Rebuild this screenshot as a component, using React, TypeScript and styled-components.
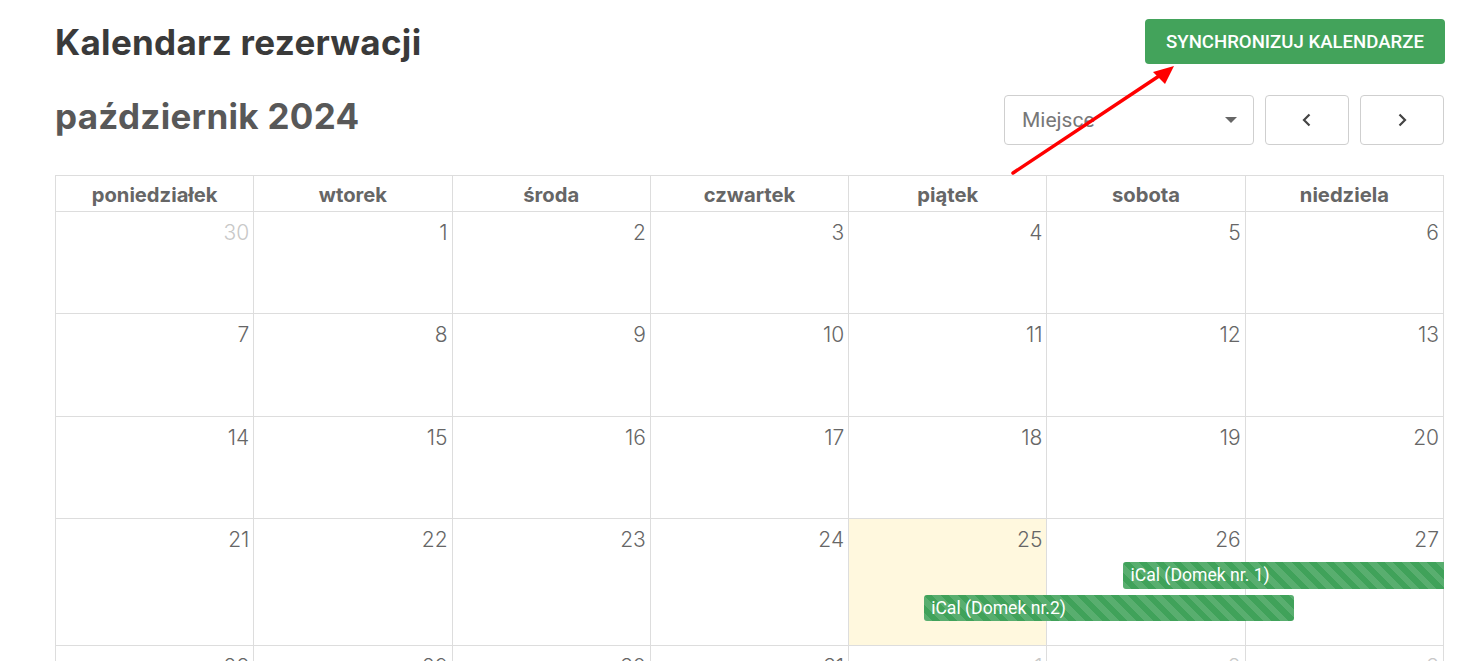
import React from "react";
import styled, { createGlobalStyle } from "styled-components";

const GlobalStyle = createGlobalStyle`
  html, body { margin: 0; padding: 0; background: #fff; }
  body { font-family: "Inter", "Noto Sans", sans-serif; }
  * { box-sizing: border-box; }
`;

const Page = styled.div`
  position: relative;
  padding: 19px 22px 40px 55px;
`;

const TopRow = styled.div`
  display: flex;
  align-items: center;
  justify-content: space-between;
  height: 45px;
`;

const Title = styled.h1`
  margin: 0;
  font-family: "Inter", sans-serif;
  font-weight: 700;
  font-size: 35px;
  line-height: 45px;
  color: #3a3a3a;
  letter-spacing: 0.3px;
  padding-top: 2px;
`;

const SyncButton = styled.button`
  height: 45px;
  width: 300px;
  border: none;
  border-radius: 4px;
  background: #43a35b;
  color: #fff;
  font-family: "Roboto", sans-serif;
  font-weight: 500;
  font-size: 18.6px;
  text-transform: uppercase;
  margin-right: -1px;
  padding: 0;
`;

const ControlsRow = styled.div`
  display: flex;
  align-items: center;
  justify-content: space-between;
  height: 49px;
  margin-top: 31px;
`;

const MonthTitle = styled.h2`
  margin: 0;
  font-family: "Inter", sans-serif;
  font-weight: 700;
  font-size: 35px;
  line-height: 45px;
  letter-spacing: 0.3px;
  color: #585858;
  margin-top: -6px;
`;

const Controls = styled.div`
  display: flex;
  gap: 11px;
  align-items: center;
`;

const Select = styled.div`
  width: 250px;
  height: 50px;
  border: 1px solid #cfcfcf;
  border-radius: 4px;
  display: flex;
  align-items: center;
  justify-content: space-between;
  padding: 0 16px 0 17px;
  font-family: "Roboto", sans-serif;
  font-size: 21px;
  color: #777;
`;

const Caret = styled.span`
  width: 0;
  height: 0;
  border-left: 6px solid transparent;
  border-right: 6px solid transparent;
  border-top: 6px solid #666;
`;

const NavButton = styled.button`
  width: 84px;
  height: 50px;
  border: 1px solid #cfcfcf;
  border-radius: 4px;
  background: #fff;
  display: flex;
  align-items: center;
  justify-content: center;
  padding: 0;
`;

const Table = styled.div`
  margin-top: 31px;
  border-top: 1px solid #ddd;
  border-left: 1px solid #ddd;
`;

const HeaderRow = styled.div`
  display: grid;
  grid-template-columns: repeat(7, 1fr);
`;

const HeaderCell = styled.div`
  height: 36px;
  border-right: 1px solid #ddd;
  border-bottom: 1px solid #ddd;
  display: flex;
  align-items: center;
  justify-content: center;
  font-family: "Inter", sans-serif;
  font-weight: 700;
  font-size: 20.2px;
  color: #666;
  padding-top: 2px;
`;

const Week = styled.div<{ $min: number }>`
  display: grid;
  grid-template-columns: repeat(7, 1fr);
  grid-template-rows: 42px auto auto 1fr;
  min-height: ${(p) => p.$min}px;
`;

const DayCell = styled.div<{ $col: number; $today?: boolean }>`
  grid-column: ${(p) => p.$col};
  grid-row: 1 / -1;
  border-right: 1px solid #ddd;
  border-bottom: 1px solid #ddd;
  background: ${(p) => (p.$today ? "#fff8de" : "#fff")};
`;

const DayNum = styled.div<{ $col: number; $other?: boolean }>`
  grid-column: ${(p) => p.$col};
  grid-row: 1;
  text-align: right;
  padding: 8px 5px 0 0;
  font-family: "Inter", sans-serif;
  font-weight: 300;
  font-size: 21px;
  line-height: 26px;
  color: ${(p) => (p.$other ? "#c8c8c8" : "#666")};
  z-index: 1;
`;

const Event = styled.div<{
  $from: number;
  $to: number;
  $row: number;
  $ml: number;
  $mr: number;
  $openEnd?: boolean;
}>`
  grid-column: ${(p) => p.$from} / ${(p) => p.$to};
  grid-row: ${(p) => p.$row};
  margin: ${(p) => (p.$row === 2 ? 1 : 6)}px ${(p) => p.$mr}px 0 ${(p) => p.$ml}px;
  height: ${(p) => (p.$row === 2 ? 27 : 26)}px;
  border-radius: ${(p) => (p.$openEnd ? "3px 0 0 3px" : "3px")};
  background-color: #40a25a;
  background-image: repeating-linear-gradient(
    45deg,
    rgba(255, 255, 255, 0.13) 0 6px,
    transparent 6px 12px
  );
  color: #fff;
  font-family: "Roboto", sans-serif;
  font-size: 17.6px;
  line-height: 26px;
  padding-left: 7px;
  white-space: nowrap;
  overflow: hidden;
  z-index: 2;
`;

const WeekBottom = styled.div`
  grid-column: 1 / -1;
  grid-row: 4;
  height: 25px;
`;

const ArrowLayer = styled.svg`
  position: absolute;
  left: 0;
  top: 0;
  pointer-events: none;
  z-index: 10;
`;

const days = ["poniedziałek", "wtorek", "środa", "czwartek", "piątek", "sobota", "niedziela"];

type D = { n: number; other?: boolean; today?: boolean };

const weeks: { days: D[]; min: number; events?: boolean }[] = [
  { days: [{ n: 30, other: true }, { n: 1 }, { n: 2 }, { n: 3 }, { n: 4 }, { n: 5 }, { n: 6 }], min: 102 },
  { days: [7, 8, 9, 10, 11, 12, 13].map((n) => ({ n })), min: 103 },
  { days: [14, 15, 16, 17, 18, 19, 20].map((n) => ({ n })), min: 102 },
  {
    days: [{ n: 21 }, { n: 22 }, { n: 23 }, { n: 24 }, { n: 25, today: true }, { n: 26 }, { n: 27 }],
    min: 102,
    events: true,
  },
  {
    days: [{ n: 28 }, { n: 29 }, { n: 30 }, { n: 31 }, { n: 1, other: true }, { n: 2, other: true }, { n: 3, other: true }],
    min: 102,
  },
];

const ChevronLeft = () => (
  <svg width="12" height="16" viewBox="0 0 12 16">
    <path d="M8.5 2.5 L3 8 L8.5 13.5" fill="none" stroke="#444" strokeWidth="2.2" />
  </svg>
);

const ChevronRight = () => (
  <svg width="12" height="16" viewBox="0 0 12 16">
    <path d="M3.5 2.5 L9 8 L3.5 13.5" fill="none" stroke="#444" strokeWidth="2.2" />
  </svg>
);

export default function App() {
  return (
    <>
      <GlobalStyle />
      <Page>
        <TopRow>
          <Title>Kalendarz rezerwacji</Title>
          <SyncButton>Synchronizuj kalendarze</SyncButton>
        </TopRow>
        <ControlsRow>
          <MonthTitle>październik 2024</MonthTitle>
          <Controls>
            <Select>
              <span>Miejsce</span>
              <Caret />
            </Select>
            <NavButton>
              <ChevronLeft />
            </NavButton>
            <NavButton>
              <ChevronRight />
            </NavButton>
          </Controls>
        </ControlsRow>
        <Table>
          <HeaderRow>
            {days.map((d) => (
              <HeaderCell key={d}>{d}</HeaderCell>
            ))}
          </HeaderRow>
          {weeks.map((w, wi) => (
            <Week key={wi} $min={w.min}>
              {w.days.map((d, i) => (
                <DayCell key={"c" + i} $col={i + 1} $today={d.today} />
              ))}
              {w.days.map((d, i) => (
                <DayNum key={"n" + i} $col={i + 1} $other={d.other}>
                  {d.n}
                </DayNum>
              ))}
              {w.events && (
                <>
                  <Event $from={6} $to={8} $row={2} $ml={76} $mr={0} $openEnd>
                    iCal (Domek nr. 1)
                  </Event>
                  <Event $from={5} $to={8} $row={3} $ml={75} $mr={150}>
                    iCal (Domek nr.2)
                  </Event>
                  <WeekBottom />
                </>
              )}
            </Week>
          ))}
        </Table>
        <ArrowLayer width="1466" height="661" viewBox="0 0 1466 661">
          <line x1="1013" y1="173" x2="1162" y2="74" stroke="#ff0000" strokeWidth="3.5" strokeLinecap="round" />
          <polygon points="1174,66 1153,72 1165,84" fill="#ff0000" />
        </ArrowLayer>
      </Page>
    </>
  );
}
